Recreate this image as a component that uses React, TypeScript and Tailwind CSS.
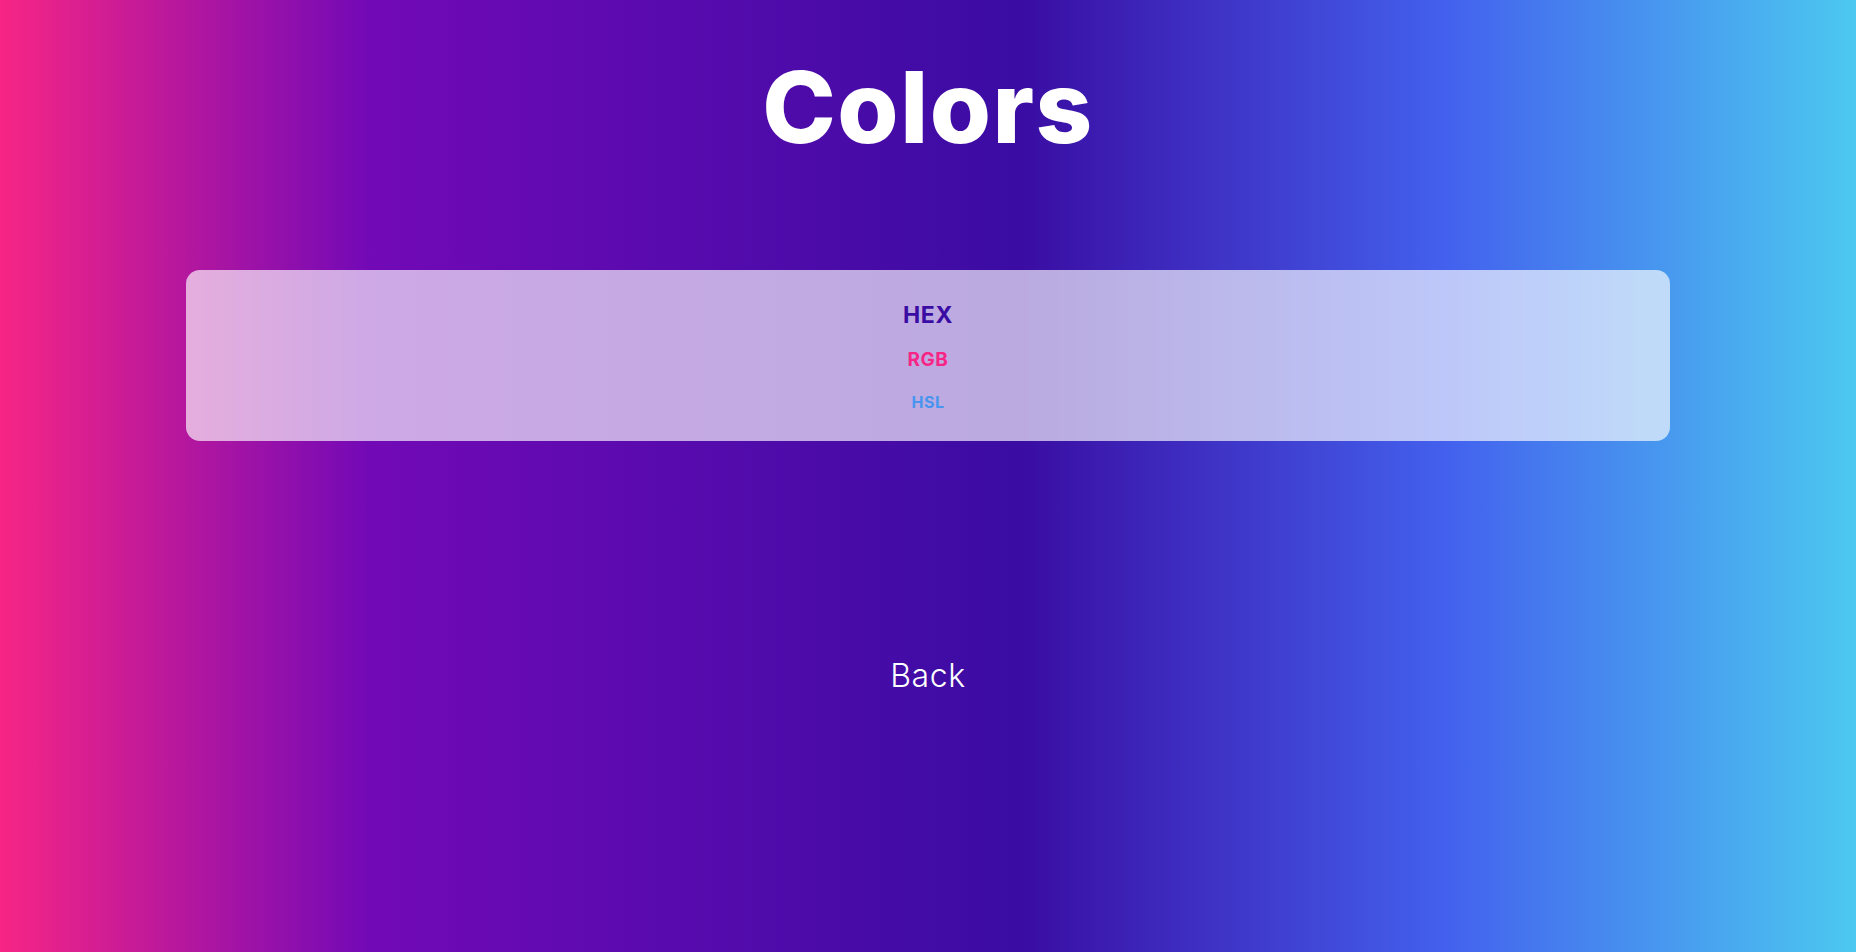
export default function App() {
  const formats = [
    { label: "HEX", cls: "text-[23px] text-[#3a0ca3] mt-[34px]" },
    { label: "RGB", cls: "text-[19px] text-[#f72585] mt-[23px]" },
    { label: "HSL", cls: "text-[16px] text-[#4895ef] mt-[25px]" },
  ];

  return (
    <div
      className="h-screen w-full overflow-hidden flex flex-col items-center bg-[linear-gradient(90deg,#f72585_0%,#7209b7_20%,#3a0ca3_55%,#4361ee_78%,#4cc9f0_100%)] font-['Inter','Liberation_Sans',sans-serif]"
    >
      <h1 className="mt-[58px] text-[99px] leading-none font-extrabold text-white tracking-[0.015em]">
        Colors
      </h1>

      <div className="mt-[113px] w-[1484px] rounded-[14px] bg-white/65 flex flex-col items-center pb-[31px]">
        {formats.map((f) => (
          <div key={f.label} className={`leading-none font-bold tracking-[0.03em] ${f.cls}`}>
            {f.label}
          </div>
        ))}
      </div>

      <button className="mt-[219px] text-[32px] leading-none font-light text-white tracking-[0.02em] cursor-pointer">
        Back
      </button>
    </div>
  );
}
